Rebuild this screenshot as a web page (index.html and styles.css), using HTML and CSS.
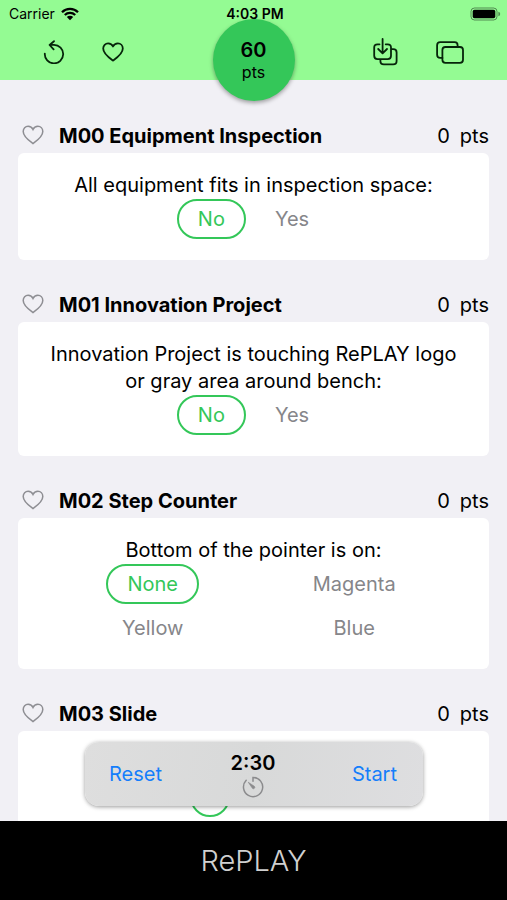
FILE: index.html
```html
<!DOCTYPE html>
<html lang="en">
<head>
<meta charset="utf-8">
<meta name="viewport" content="width=device-width, initial-scale=1">
<title>RePLAY scorer</title>
<link rel="stylesheet" href="styles.css">
</head>
<body>
<svg class="defs" aria-hidden="true">
  <symbol id="heart" viewBox="0 0 22 20"><path d="M11 18.6C8.2 16.6 1.2 12 1.2 6.6C1.2 3.5 3.4 1.3 6.1 1.3C8.3 1.3 10.1 2.5 11 4.5C11.9 2.5 13.7 1.3 15.9 1.3C18.6 1.3 20.8 3.5 20.8 6.6C20.8 12 13.8 16.6 11 18.6Z"/></symbol>
</svg>
<header class="header">
  <div class="status">
    <div class="carrier"><span>Carrier</span>
      <svg width="18" height="14" viewBox="0 0 18 14" aria-hidden="true"><path d="M1 5.2A11.4 11.4 0 0 1 17 5.2M3.8 8A7.5 7.5 0 0 1 14.2 8" fill="none" stroke="#000" stroke-width="2.3"/><path d="M5.8 10A4.6 4.6 0 0 1 12.2 10L9 13.3Z"/></svg>
    </div>
    <time class="clock">4:03 PM</time>
    <svg class="battery" width="31" height="14" viewBox="0 0 31 14" aria-hidden="true"><rect x="1" y="1" width="26" height="12" rx="3.5" fill="none" stroke="#000" stroke-opacity=".45"/><rect x="2.7" y="2.7" width="22.6" height="8.6" rx="1.8"/><path d="M28.4 4.8Q30.2 5.3 30.2 7T28.4 9.2Z" fill-opacity=".45"/></svg>
  </div>
  <nav class="tools">
    <div class="tool-group tool-group-left">
      <button class="tool" aria-label="Reset scores"><svg width="22" height="24" viewBox="0 0 22 24"><path d="M1.8 13.6A9.2 9.2 0 1 0 11 4.9H6.8M11 1.2L6.6 5L10.6 9.4"/></svg></button>
      <button class="tool" aria-label="Favorites"><svg width="22" height="20"><use href="#heart"/></svg></button>
    </div>
    <div class="tool-group tool-group-right">
      <button class="tool" aria-label="Save"><svg width="25" height="28" viewBox="0 0 25 28"><path d="M6.5 6.3H4.5Q1.2 6.3 1.2 9.6V17.8Q1.2 21.1 4.5 21.1H14.7Q18 21.1 18 17.8V9.6Q18 6.3 14.7 6.3H12.7M9.6 1V15M5.2 11L9.6 15.4L14 11M18 11.2H20.2Q23.6 11.2 23.6 14.5V23Q23.6 26.4 20.2 26.4H10.8Q7.4 26.4 7.4 23V21.1"/></svg></button>
      <button class="tool" aria-label="Saved runs"><svg width="28" height="23" viewBox="0 0 28 23"><rect x="6.4" y="6" width="20.6" height="15.8" rx="3"/><path d="M6.4 16.9H4.2Q1.1 16.9 1.1 13.8V4.2Q1.1 1.1 4.2 1.1H18.6Q21.6 1.1 21.6 4.2V6"/></svg></button>
    </div>
  </nav>
  <div class="score"><strong>60</strong><span>pts</span></div>
</header>

<div class="body">
  <main class="missions">
    <section class="mission">
      <div class="mission-head">
        <button class="fav" aria-label="Favorite M00"><svg width="22" height="20"><use href="#heart"/></svg></button>
        <h2>M00 Equipment Inspection</h2><span class="pts"><span>0</span><span>pts</span></span>
      </div>
      <fieldset class="card">
        <legend>All equipment fits in inspection space:</legend>
        <div class="options">
          <label class="option"><input type="radio" name="m00" checked><span>No</span></label>
          <label class="option"><input type="radio" name="m00"><span>Yes</span></label>
        </div>
      </fieldset>
    </section>
    <section class="mission">
      <div class="mission-head">
        <button class="fav" aria-label="Favorite M01"><svg width="22" height="20"><use href="#heart"/></svg></button>
        <h2>M01 Innovation Project</h2><span class="pts"><span>0</span><span>pts</span></span>
      </div>
      <fieldset class="card">
        <legend>Innovation Project is touching RePLAY logo or gray area around bench:</legend>
        <div class="options">
          <label class="option"><input type="radio" name="m01" checked><span>No</span></label>
          <label class="option"><input type="radio" name="m01"><span>Yes</span></label>
        </div>
      </fieldset>
    </section>
    <section class="mission">
      <div class="mission-head">
        <button class="fav" aria-label="Favorite M02"><svg width="22" height="20"><use href="#heart"/></svg></button>
        <h2>M02 Step Counter</h2><span class="pts"><span>0</span><span>pts</span></span>
      </div>
      <fieldset class="card">
        <legend>Bottom of the pointer is on:</legend>
        <div class="options options-grid">
          <label class="option"><input type="radio" name="m02" checked><span>None</span></label>
          <label class="option"><input type="radio" name="m02"><span>Magenta</span></label>
          <label class="option"><input type="radio" name="m02"><span>Yellow</span></label>
          <label class="option"><input type="radio" name="m02"><span>Blue</span></label>
        </div>
      </fieldset>
    </section>
    <section class="mission">
      <div class="mission-head">
        <button class="fav" aria-label="Favorite M03"><svg width="22" height="20"><use href="#heart"/></svg></button>
        <h2>M03 Slide</h2><span class="pts"><span>0</span><span>pts</span></span>
      </div>
      <fieldset class="card" aria-label="Slide figures">
        <div class="options options-count">
          <label class="option"><input type="radio" name="m03" aria-label="None" checked><span></span></label>
          <label class="option"><input type="radio" name="m03" aria-label="One"><span></span></label>
          <label class="option"><input type="radio" name="m03" aria-label="Two"><span></span></label>
        </div>
      </fieldset>
    </section>
  </main>
  <div class="timer">
    <button class="timer-action">Reset</button>
    <div class="timer-face"><strong>2:30</strong>
      <svg width="22" height="22" viewBox="0 0 22 22" aria-hidden="true"><path d="M4.2 4.3A9.6 9.6 0 1 0 11 1.4V5.2" fill="none" stroke="#8b8b8d" stroke-width="1.5" stroke-linecap="round"/><path d="M6.2 6.2L12.4 10.3A1.4 1.4 0 0 1 10.4 12.3Z" fill="#8b8b8d" stroke="#8b8b8d" stroke-width=".6"/></svg>
    </div>
    <button class="timer-action">Start</button>
  </div>
</div>
<footer class="footer">RePLAY</footer>
</body>
</html>
```
FILE: styles.css
```css
* { box-sizing: border-box; }

body {
  margin: 0;
  height: 100vh;
  display: flex;
  flex-direction: column;
  background: #f1f0f5;
  color: #000;
  font: 20px/27px Inter, "Liberation Sans", sans-serif;
}

button {
  display: flex;
  padding: 0;
  border: 0;
  background: none;
  font: inherit;
  cursor: pointer;
}

.defs { position: absolute; width: 0; height: 0; }

/* Header */
.header {
  position: relative;
  z-index: 1;
  background: #94fb93;
}
.status {
  display: grid;
  grid-template-columns: 1fr auto 1fr;
  align-items: center;
  height: 27px;
  padding: 0 6px 0 9px;
  font-size: 14px;
}
.carrier { display: flex; align-items: center; gap: 6px; }
.clock { font-size: 14px; font-weight: 600; }
.battery { justify-self: end; }

.tools {
  display: flex;
  justify-content: space-between;
  height: 53px;
  padding: 0 43px;
}
.tool-group { display: flex; align-items: center; height: 50px; }
.tool-group-left { gap: 37px; }
.tool-group-right { gap: 38px; }
.tool svg {
  fill: none;
  stroke: #06240a;
  stroke-width: 1.8;
  stroke-linecap: round;
  stroke-linejoin: round;
}

.score {
  position: absolute;
  top: 19px;
  left: 50%;
  width: 82px;
  height: 82px;
  margin-left: -41px;
  display: flex;
  flex-direction: column;
  align-items: center;
  justify-content: center;
  border-radius: 50%;
  background: #34c759;
  box-shadow: 0 2px 4px rgba(0, 0, 0, .35);
  font-size: 16px;
  line-height: 20px;
}
.score strong { font-size: 20px; line-height: 24px; font-weight: 600; }

/* Missions */
.body {
  position: relative;
  flex: 1;
  min-height: 0;
}
.missions {
  height: 100%;
  padding: 43px 18px 0;
  display: flex;
  flex-direction: column;
  gap: 32px;
  overflow-y: auto;
  scrollbar-width: none;
}
.mission { flex: none; }
.mission-head {
  display: flex;
  align-items: center;
  height: 30px;
  padding: 0 0 4px 4px;
}
.mission-head h2 {
  flex: 1;
  margin: 0 0 0 15px;
  font-size: 20px;
  line-height: 26px;
  font-weight: 700;
}
.fav { padding-bottom: 3px; }
.fav svg { fill: none; stroke: #8e8e93; stroke-width: 1.5; }
.pts { display: flex; gap: 10px; }

.card {
  min-width: 0;
  margin: 0;
  padding: 19px 24px 21px;
  border: 0;
  border-radius: 6px;
  background: #fff;
  text-align: center;
}
.card legend {
  float: left;
  width: 100%;
  padding: 0;
}
.options {
  clear: both;
  display: flex;
  justify-content: center;
  gap: 8px;
}
.options-grid {
  display: grid;
  grid-template-columns: 1fr 1fr;
  justify-items: center;
  gap: 4px 0;
  padding: 0 10px;
}
.options-count { gap: 4px; padding-top: 27px; }

.option { position: relative; display: flex; color: #86868a; cursor: pointer; }
.option input {
  position: absolute;
  inset: 0;
  margin: 0;
  opacity: 0;
}
.option span {
  height: 40px;
  min-width: 40px;
  padding: 0 19px;
  border: 2px solid transparent;
  border-radius: 20px;
  line-height: 36px;
}
.options-count span { padding: 0; }
.option input:checked + span { border-color: #34c759; color: #34c759; }

/* Timer */
.timer {
  position: absolute;
  left: 85px;
  right: 84px;
  bottom: 15px;
  display: grid;
  grid-template-columns: 1fr auto 1fr;
  align-items: center;
  height: 64px;
  padding: 0 26px 0 24px;
  border-radius: 14px;
  background: linear-gradient(100deg, #dedede, #d8d9d9 50%, #dedee0);
  box-shadow: 0 1px 4px rgba(0, 0, 0, .4);
}
.timer-face {
  display: flex;
  flex-direction: column;
  align-items: center;
  line-height: 26px;
}
.timer-face strong { font-weight: 600; }
.timer-action { color: #147efb; }
.timer-action:last-child { justify-self: end; }

/* Footer */
.footer {
  height: 79px;
  background: #000;
  color: #d0d0d0;
  font-size: 29px;
  font-weight: 300;
  line-height: 79px;
  text-align: center;
}
```
